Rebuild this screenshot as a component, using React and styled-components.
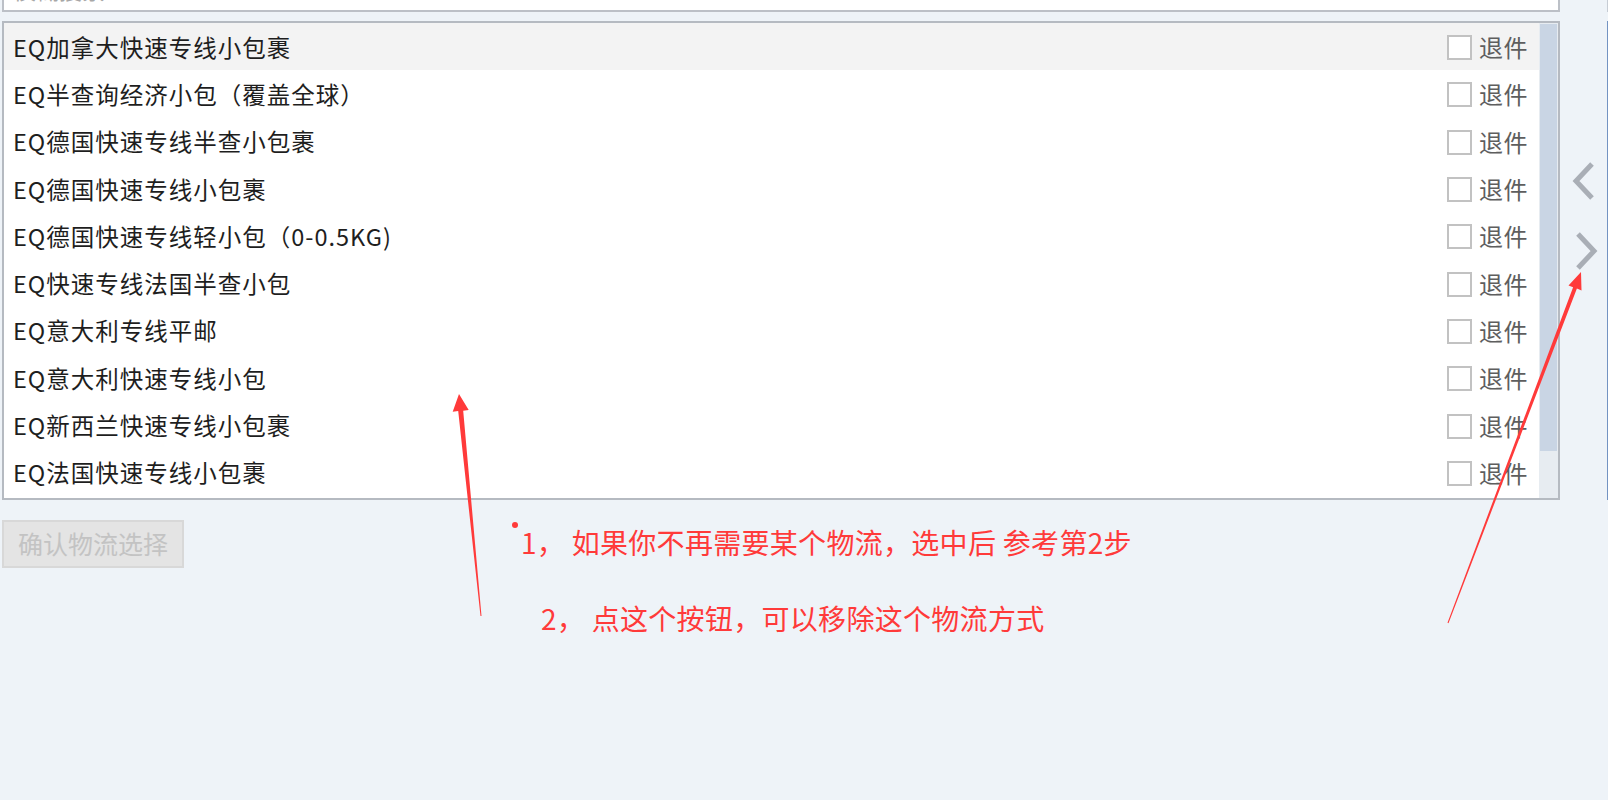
import React from 'react'
import styled, { createGlobalStyle } from 'styled-components'

const GlobalStyle = createGlobalStyle`
  html, body {
    margin: 0;
    padding: 0;
    background: #eef3f8;
    overflow: hidden;
  }
  body {
    font-family: "Noto Sans CJK SC", "Noto Sans", sans-serif;
  }
`

const Page = styled.div`
  position: relative;
  display: flex;
  align-items: flex-start;
  width: 1608px;
  height: 831px;
  margin-top: -31px;
  padding-left: 2px;
  box-sizing: border-box;
`

const LeftCol = styled.div`
  display: flex;
  flex-direction: column;
  width: 1558px;
  flex-shrink: 0;
`

const SearchInput = styled.input`
  height: 43px;
  box-sizing: border-box;
  border: 2px solid #bcc0c7;
  background: #fff;
  padding: 0 9px 4px;
  font-family: inherit;
  font-size: 23px;
  outline: none;
  &::placeholder {
    color: #a7a7a7;
  }
`

const ListBox = styled.div`
  display: flex;
  height: 479px;
  margin-top: 9px;
  box-sizing: border-box;
  border: 2px solid #b5bac1;
  background: #fff;
`

const Rows = styled.div`
  flex: 1;
  overflow: hidden;
`

const Row = styled.div`
  display: flex;
  align-items: center;
  height: 47.3px;
  padding: 0 11px 0 9px;
  background: ${p => (p.$hover ? '#f3f3f3' : '#fff')};
`

const RowName = styled.span`
  flex: 1;
  font-size: 23.5px;
  letter-spacing: 1px;
  color: #1e1e1e;
  white-space: nowrap;
`

const CheckBox = styled.span`
  width: 25px;
  height: 25px;
  margin-top: 2px;
  box-sizing: border-box;
  border: 2px solid #c2c2c2;
  background: #fff;
`

const CheckLabel = styled.span`
  margin-left: 7px;
  font-size: 24px;
  letter-spacing: 0.5px;
  color: #5e5e5e;
`

const Scrollbar = styled.div`
  width: 19px;
  padding: 1px 1px 0;
  box-sizing: border-box;
  background: #e7ecf1;
`

const Thumb = styled.div`
  height: 427px;
  background: #c9d5e4;
`

const ConfirmButton = styled.button`
  width: 182px;
  height: 48px;
  margin-top: 20px;
  box-sizing: border-box;
  border: 2px solid #d8d8d8;
  background: #e4e4e4;
  color: #c3c3c3;
  font-family: inherit;
  font-size: 25px;
  padding: 0 0 2px;
`

const MoveCol = styled.div`
  display: flex;
  flex-direction: column;
  gap: 20px;
  width: 47px;
  flex-shrink: 0;
  padding-top: 187px;
`

const MoveButton = styled.button`
  display: flex;
  align-items: center;
  justify-content: center;
  width: 47px;
  height: 50px;
  padding: 0 0 0 ${p => p.$shift || 0}px;
  border: none;
  background: transparent;
`

const RightCol = styled.div`
  display: flex;
  flex-direction: column;
  flex: 1;
`

const RightSearch = styled.div`
  height: 43px;
  box-sizing: border-box;
  border-left: 1px solid #c6ccd4;
  background: #fff;
`

const RightList = styled.div`
  height: 479px;
  margin-top: 9px;
  box-sizing: border-box;
  border-left: 1px solid #7393c2;
  background: #fff;
`

const Overlay = styled.svg`
  position: absolute;
  left: 0;
  top: 31px;
  pointer-events: none;
`

const Note = styled.span`
  position: absolute;
  left: ${p => p.$x}px;
  top: ${p => p.$y + 31}px;
  font-size: 28px;
  line-height: 28px;
  letter-spacing: 0.3px;
  color: #ff3a3a;
  white-space: pre;
`

const routes = [
  'EQ加拿大快速专线小包裹',
  'EQ半查询经济小包（覆盖全球）',
  'EQ德国快速专线半查小包裹',
  'EQ德国快速专线小包裹',
  'EQ德国快速专线轻小包（0-0.5KG)',
  'EQ快速专线法国半查小包',
  'EQ意大利专线平邮',
  'EQ意大利快速专线小包',
  'EQ新西兰快速专线小包裹',
  'EQ法国快速专线小包裹',
]

function Chevron({ dir }) {
  const d = dir === 'left' ? 'M20 2 L4 19 L20 36' : 'M4 2 L20 19 L4 36'
  return (
    <svg width="24" height="38" viewBox="0 0 24 38">
      <path d={d} fill="none" stroke="#a9aeb6" strokeWidth="5" />
    </svg>
  )
}

export default function App() {
  return (
    <>
      <GlobalStyle />
      <Page>
        <LeftCol>
          <SearchInput placeholder="模糊搜索" />
          <ListBox>
            <Rows>
              {routes.map((name, i) => (
                <Row key={name} $hover={i === 0}>
                  <RowName>{name}</RowName>
                  <CheckBox />
                  <CheckLabel>退件</CheckLabel>
                </Row>
              ))}
            </Rows>
            <Scrollbar>
              <Thumb />
            </Scrollbar>
          </ListBox>
          <ConfirmButton disabled>确认物流选择</ConfirmButton>
        </LeftCol>

        <MoveCol>
          <MoveButton>
            <Chevron dir="left" />
          </MoveButton>
          <MoveButton $shift={4}>
            <Chevron dir="right" />
          </MoveButton>
        </MoveCol>

        <RightCol>
          <RightSearch />
          <RightList />
        </RightCol>

        {/* 截图上的红色标注 */}
        <Overlay width="1608" height="800" viewBox="0 0 1608 800">
          <circle cx="515" cy="525" r="3" fill="#ff3a3a" />
          <polygon
            fill="#ff3a3a"
            points="459,394 468.7,410.1 463.2,410.7 481.5,616 480.5,616 458.2,411.1 452.7,411.7"
          />
          <polygon
            fill="#ff3a3a"
            points="1581,272 1581.5,290.4 1576.9,288.6 1448.5,623.2 1447.5,622.8 1573.1,287.2 1568.5,285.4"
          />
        </Overlay>
        <Note $x={521} $y={528}>1， 如果你不再需要某个物流，选中后 参考第2步</Note>
        <Note $x={541} $y={604}>2， 点这个按钮，可以移除这个物流方式</Note>
      </Page>
    </>
  )
}
